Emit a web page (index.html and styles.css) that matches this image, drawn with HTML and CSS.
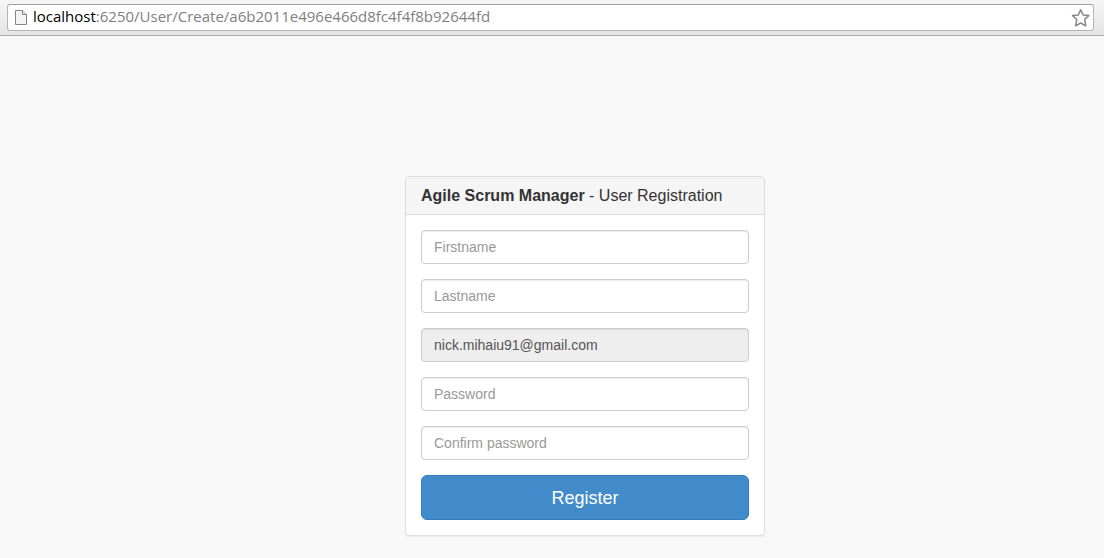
FILE: index.html
```html
<!DOCTYPE html>
<html lang="en">
<head>
<meta charset="utf-8">
<meta name="viewport" content="width=device-width, initial-scale=1">
<title>Agile Scrum Manager - User Registration</title>
<link rel="stylesheet" href="styles.css">
</head>
<body>
<header class="toolbar">
  <div class="address">
    <svg class="page-icon" viewBox="0 0 12 16" aria-hidden="true">
      <path d="M.5.5h7l4 4v10H.5z" fill="#f4f4f4" stroke="#858585"/>
      <path d="M7.5.5v4h4" fill="#e4e4e4" stroke="#858585"/>
    </svg>
    <div class="url"><span class="host">localhost</span>:6250/User/Create/a6b2011e496e466d8fc4f4f8b92644fd</div>
    <button class="bookmark" type="button" aria-label="Bookmark this page">
      <svg class="star" viewBox="0 0 20 20" aria-hidden="true">
        <path d="M10.7 1.8l2.4 5.1 5.7.7-4.2 3.9 1.1 5.7q.1.7-.6.4l-4.4-2.7-4.4 2.7q-.7.3-.6-.4l1.1-5.7-4.2-3.9 5.7-.7z" fill="#fff" stroke="#858585" stroke-width="1.5" stroke-linejoin="round"/>
      </svg>
    </button>
  </div>
</header>
<main class="page">
  <section class="panel">
    <h1 class="panel-heading"><strong>Agile Scrum Manager</strong> - User Registration</h1>
    <form class="panel-body">
      <input class="field" type="text" placeholder="Firstname" aria-label="Firstname">
      <input class="field" type="text" placeholder="Lastname" aria-label="Lastname">
      <input class="field" type="email" value="nick.mihaiu91@gmail.com" aria-label="Email" readonly>
      <input class="field" type="password" placeholder="Password" aria-label="Password">
      <input class="field" type="password" placeholder="Confirm password" aria-label="Confirm password">
      <button class="register" type="submit">Register</button>
    </form>
  </section>
</main>
</body>
</html>
```
FILE: styles.css
```css
* {
  box-sizing: border-box;
}

body {
  margin: 0;
  background: #f8f8f8;
  color: #333;
  font-family: "Liberation Sans", Arial, sans-serif;
  font-size: 14px;
}

.toolbar {
  padding: 4px 10px 4px 7px;
  border-bottom: 1px solid #a9a9a9;
  background: linear-gradient(#f6f6f6, #e4e4e4);
}

.address {
  display: flex;
  align-items: center;
  height: 27px;
  padding: 0 3px 0 7px;
  border: 1px solid #b4b4b4;
  border-top-color: #a0a0a0;
  border-radius: 3px;
  background: #fff;
}

.page-icon {
  flex: none;
  width: 12px;
  height: 16px;
  margin-right: 6px;
}

.url {
  flex: 1;
  overflow: hidden;
  padding-bottom: 2px;
  color: #808080;
  font-family: "Open Sans", "Noto Sans", sans-serif;
  font-size: 15px;
  line-height: 23px;
  white-space: nowrap;
}

.host {
  color: #000;
}

.bookmark {
  display: flex;
  padding: 0;
  border: 0;
  background: none;
}

.star {
  width: 20px;
  height: 20px;
}

.page {
  display: flex;
  justify-content: center;
  padding: 140px 0 20px 66px;
}

.panel {
  width: 100%;
  max-width: 360px;
  border: 1px solid #ddd;
  border-radius: 4px;
  background: #fff;
  box-shadow: 0 1px 1px rgba(0, 0, 0, 0.05);
}

.panel-heading {
  margin: 0;
  padding: 9px 15px;
  border-bottom: 1px solid #ddd;
  border-radius: 3px 3px 0 0;
  background: #f5f5f5;
  font-size: 16px;
  font-weight: 400;
  line-height: 19px;
}

.panel-body {
  display: grid;
  gap: 15px;
  padding: 15px;
}

.field {
  width: 100%;
  height: 34px;
  padding: 6px 12px;
  border: 1px solid #ccc;
  border-radius: 4px;
  background: #fff;
  box-shadow: inset 0 1px 1px rgba(0, 0, 0, 0.075);
  color: #555;
  font: inherit;
}

.field::placeholder {
  color: #999;
  opacity: 1;
}

.field:read-only {
  background: #eee;
}

.register {
  height: 45px;
  padding: 2px 16px 0;
  border: 1px solid #357ebd;
  border-radius: 6px;
  background: #428bca;
  color: #fff;
  font-family: inherit;
  font-size: 18px;
}
```
